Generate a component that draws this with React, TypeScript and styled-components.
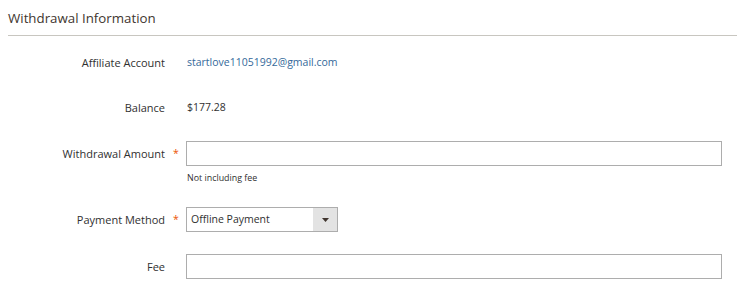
import React from 'react';
import styled, { createGlobalStyle } from 'styled-components';

const GlobalStyle = createGlobalStyle`
    body {
        margin: 0;
        background: #ffffff;
        font-family: "Open Sans", "Liberation Sans", sans-serif;
        color: #303030;
    }
`
const Fieldset = styled.div`
    padding-left: 8px;
    width: 729px;
`
const Title = styled.div`
    height: 36px;
    border-bottom: 1px solid #c8c6c0;
    font-size: 13.3px;
    line-height: 36px;
    color: #41362f;
    box-sizing: border-box;
`
const Fields = styled.div`
    display: flex;
    flex-direction: column;
    padding-top: 14px;
`
const Row = styled.div<{ $gap?: number }>`
    display: grid;
    grid-template-columns: 157px 21px 1fr;
    align-items: start;
    margin-bottom: ${p => p.$gap ?? 21}px;
    padding-right: 15px;
`
const Label = styled.div`
    text-align: right;
    font-size: 11px;
    line-height: 25px;
    height: 25px;
    color: #303030;
`
const Star = styled.div`
    color: #eb5202;
    font-size: 10.5px;
    line-height: 25px;
    padding-left: 8px;
`
const Value = styled.div<{ $link?: boolean }>`
    font-size: 10.5px;
    line-height: 25px;
    padding-left: 1px;
    color: ${p => (p.$link ? '#34699a' : '#303030')};
`
const Input = styled.input`
    display: block;
    width: 100%;
    height: 25px;
    box-sizing: border-box;
    border: 1px solid #adadad;
    background: #fff;
    margin: 0;
    padding: 0 7px;
    font-family: inherit;
    font-size: 10.5px;
`
const Note = styled.div`
    font-size: 8.9px;
    line-height: 13px;
    margin-top: 5px;
    padding-left: 1px;
    color: #303030;
`
const Select = styled.div`
    display: flex;
    width: 152px;
    height: 25px;
    box-sizing: border-box;
    border: 1px solid #adadad;
    background: #fff;
`
const SelectText = styled.div`
    flex: 1;
    font-size: 10.5px;
    line-height: 23px;
    padding-left: 4px;
    color: #303030;
`
const SelectArrow = styled.div`
    width: 24px;
    background: #e3e3e3;
    display: flex;
    align-items: center;
    justify-content: center;
`

const App: React.FC = () => {
    return (
        <>
            <GlobalStyle />
            <Fieldset>
                <Title>Withdrawal Information</Title>
                <Fields>
                    <Row $gap={20}>
                        <Label>Affiliate Account</Label>
                        <span />
                        <Value $link>startlove11051992@gmail.com</Value>
                    </Row>
                    <Row $gap={21}>
                        <Label>Balance</Label>
                        <span />
                        <Value>$177.28</Value>
                    </Row>
                    <Row $gap={23}>
                        <Label>Withdrawal Amount</Label>
                        <Star>*</Star>
                        <div>
                            <Input type="text" />
                            <Note>Not including fee</Note>
                        </div>
                    </Row>
                    <Row $gap={22}>
                        <Label>Payment Method</Label>
                        <Star>*</Star>
                        <Select>
                            <SelectText>Offline Payment</SelectText>
                            <SelectArrow>
                                <svg width="7" height="4" viewBox="0 0 7 4">
                                    <path d="M0 0 L7 0 L3.5 4 Z" fill="#41362f" />
                                </svg>
                            </SelectArrow>
                        </Select>
                    </Row>
                    <Row $gap={0}>
                        <Label>Fee</Label>
                        <span />
                        <Input type="text" />
                    </Row>
                </Fields>
            </Fieldset>
        </>
    );
}

export default App;
